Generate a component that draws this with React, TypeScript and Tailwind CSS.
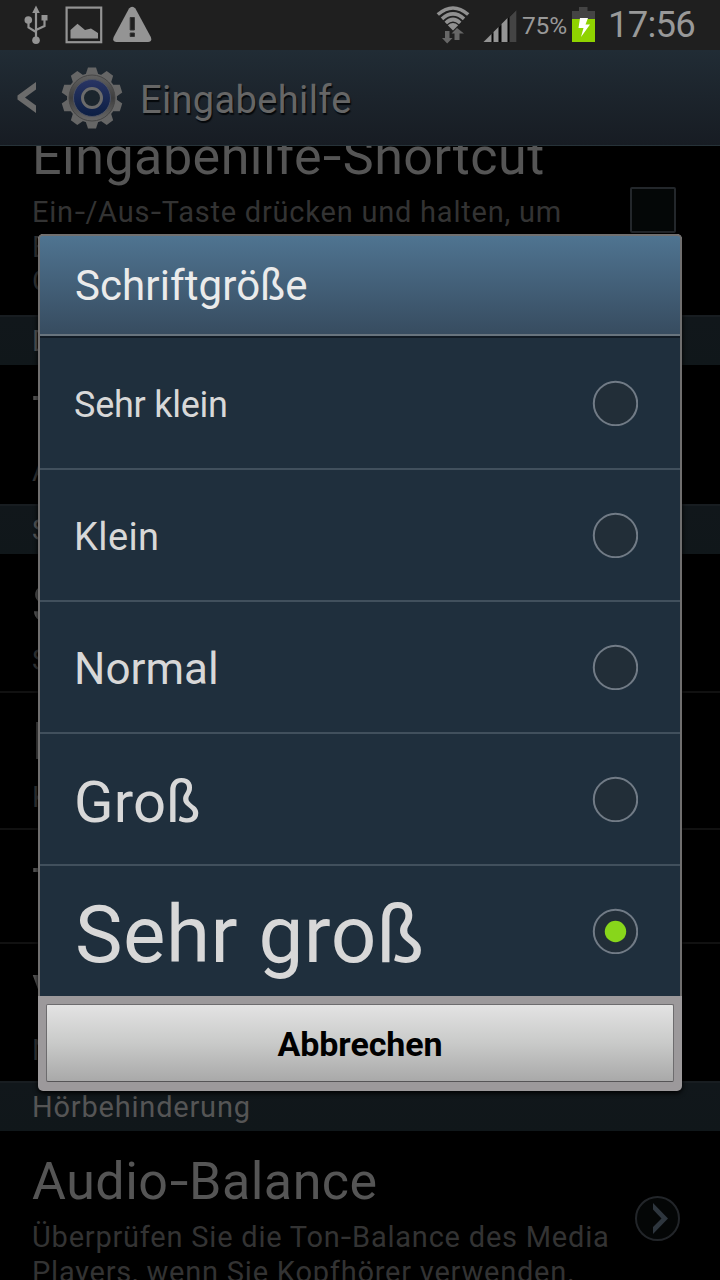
import type { ReactNode } from "react";

const titleText = "whitespace-nowrap text-[52px] leading-[60px] text-[#555555] tracking-[0.5px]";
const summaryText = "whitespace-nowrap text-[29px] leading-[34.5px] text-[#333333] tracking-[0.78px]";

function Hyphen() {
  return <span className="mx-[0.06em] inline-block scale-x-[1.3] tracking-[0px]">-</span>;
}

function StatusBar() {
  return (
    <div className="flex h-[50px] shrink-0 items-start justify-between bg-[#1f1f1f] text-[#999999]">
      <div className="flex pl-6 pt-[5px]">
        <svg width="24" height="40" viewBox="0 0 24 40" fill="none" stroke="#949494" strokeWidth="2.2">
          <path d="M12 6V36M12 27L4.500 22.500V16M12 25L20.500 21V13" />
          <path d="M12 .5L15.800 8H8.200ZM17.500 10H23.500V15.500H17.500Z" fill="#949494" stroke="none" />
          <circle cx="4.300" cy="15" r="3.800" fill="#949494" stroke="none" />
          <circle cx="12" cy="35.200" r="3.800" fill="#949494" stroke="none" />
        </svg>
        <svg className="ml-[17px]" width="38" height="40" viewBox="0 0 38 40">
          <rect x="1.600" y="2.600" width="34.600" height="34.600" fill="none" stroke="#949494" strokeWidth="2.2" />
          <path d="M5.500 33.500V25L12.500 18.800L20 25L26 23.500L33 28V33.500Z" fill="#949494" />
        </svg>
        <svg className="ml-[10px]" width="39" height="40" viewBox="0 0 39 40">
          <path d="M16 3.500Q19.200 0 22.400 3.500L37.800 32Q39.500 37 35 37H3.500Q-1 37 .7 32Z" fill="#949494" />
          <path d="M17.200 12.500H21.400V25H17.200ZM17.200 28H21.400V31.500H17.200Z" fill="#1f1f1f" stroke="#333333" strokeWidth="1" />
        </svg>
      </div>
      <div className="flex pr-[25px] pt-[5px]">
        <svg className="-ml-px" width="34" height="40" viewBox="0 0 34 40" fill="none" stroke="#909090" strokeWidth="3.6">
          <path d="M1.800 9.500Q17 -3.500 32.200 9.500" />
          <path d="M6 13.800Q17 4 28 13.800" />
          <path d="M9.800 18Q17 11 24.200 18" />
          <path d="M11.800 20.300Q17 15.800 22.200 20.300L17 25.500Z" fill="#909090" stroke="none" />
          <path d="M9 26H13.500V33H16.500L11.200 38.500L6 33H9ZM18.500 35V28.500H15.500L21 23L28 28.500H23.500V35Z" fill="#666666" stroke="none" />
        </svg>
        <svg className="ml-[13px]" width="34" height="40" viewBox="0 0 34 40">
          <path d="M1 37L33.500 5V37Z" fill="#050505" />
          <path d="M26.500 12L33.500 5V37H26.500Z" fill="#444444" />
          <path d="M.5 37L8.500 29V37ZM10.500 27L15.500 22V37H10.500ZM18.500 19L24.500 13V37H18.500Z" fill="#949494" />
        </svg>
        <span className="ml-[5px] mt-[6px] w-[46px] whitespace-nowrap text-[24.5px] leading-[30px] tracking-[-0.2px]">75%</span>
        <svg className="ml-[3px]" width="25" height="40" viewBox="0 0 25 40">
          <path d="M8 2H16.500V6H24V14H1V6H8Z" fill="#444444" />
          <path d="M1 14H24V37H1Z" fill="#8fd300" />
          <path d="M9 13H17L14.500 19.500H19L10 32L12.500 23H7.500Z" fill="#ffffff" />
        </svg>
        <span className="ml-[12px] w-[87px] whitespace-nowrap text-[36.5px] leading-[40px] tracking-[-0.8px]">17:56</span>
      </div>
    </div>
  );
}

const teeth = [0, 36, 72, 108, 144, 180, 216, 252, 288, 324];

function Gear() {
  return (
    <svg width="62" height="64" viewBox="-31 -32 62 64">
      <defs>
        <linearGradient id="metal" x1="0" y1="0" x2="0" y2="1">
          <stop offset="0" stopColor="#626262" />
          <stop offset=".5" stopColor="#3e3e3e" />
          <stop offset="1" stopColor="#686868" />
        </linearGradient>
        <linearGradient id="enamel" x1="0" y1="0" x2="0" y2="1">
          <stop offset="0" stopColor="#293564" />
          <stop offset="1" stopColor="#0b1e43" />
        </linearGradient>
      </defs>
      {teeth.map((a) => (
        <path key={a} d="M-6.500 -23L-4 -30.500H4L6.500 -23Z" fill="#666666" transform={`rotate(${a})`} />
      ))}
      <circle r="25" fill="#666666" />
      <circle r="23" fill="url(#metal)" stroke="#454545" strokeWidth="1" />
      <circle r="18.500" fill="url(#enamel)" stroke="#4c5263" strokeWidth="1" />
      <circle r="9.500" fill="#1b252d" stroke="#6b6b6b" strokeWidth="3" />
    </svg>
  );
}

function ActionBar() {
  return (
    <div className="flex h-24 shrink-0 items-start border-b border-[#263238] bg-linear-to-b from-[#212c35] to-[#171c23]">
      <svg className="ml-[17px] mt-8" width="20" height="32" viewBox="0 0 20 32">
        <path d="M19 0V7.500L8 15.500L19 23.500V31L.5 17.500V13.500Z" fill="#6b6b6b" />
      </svg>
      <div className="ml-6 mt-4">
        <Gear />
      </div>
      <h1 className="ml-[17px] mt-[27px] whitespace-nowrap text-[38px] leading-[46px] tracking-[0.35px] text-[#666666] [text-shadow:1px_2px_1px_#05080b]">
        Eingabehilfe
      </h1>
    </div>
  );
}

function Category({ children, className }: { children: ReactNode; className: string }) {
  return (
    <div className={`shrink-0 border-t-2 border-[#181d21] bg-linear-to-b from-[#11171b] to-[#10171a] pl-8 pt-px text-[29px] leading-[46px] text-[#555555] tracking-[0.8px] ${className}`}>
      {children}
    </div>
  );
}

type ItemProps = { title: string; summary?: string; className: string };

function Item({ title, summary, className }: ItemProps) {
  return (
    <div className={`flex shrink-0 flex-col gap-2 overflow-hidden border-[#111111] pl-8 ${className}`}>
      <div className={titleText}>{title}</div>
      {summary && <div className={summaryText}>{summary}</div>}
    </div>
  );
}

function SettingsList() {
  return (
    <main className="flex min-h-0 flex-1 flex-col overflow-hidden">
      <div className="flex h-[169px] shrink-0 justify-between overflow-hidden pl-8 pr-11">
        <div className="-mt-[19px] flex flex-col gap-2">
          <div className={titleText}>
            Eingabehilfe
            <Hyphen />
            Shortcut
          </div>
          <div className={summaryText}>
            Ein
            <Hyphen />
            /Aus
            <Hyphen />
            Taste drücken und halten, um
            <br />
            Eingabehilfe auf Ihrem Gerät mit einer
            <br />
            Geste zu starten
          </div>
        </div>
        <div className="mt-[41px] size-[46px] rounded-xs border-2 border-[#23272b] bg-[#040707]" />
      </div>
      <Category className="h-[50px]">Dienste</Category>
      <Item className="h-[139px] pt-[21px]" title="TalkBack" summary="Aus" />
      <Category className="h-[50px]">Sehbehinderung</Category>
      <Item className="h-[139px] border-b-2 pt-[21px]" title="Schriftgröße" summary="Sehr groß" />
      <Item className="h-[137px] border-b-2 pt-[19px]" title="Negative Farben" summary="Kehrt die Farben um" />
      <Item className="h-[114px] border-b-2 pt-[28px]" title="Text-in-Sprache" />
      <Item className="h-[137px] pt-[21px]" title="Vergrößerung" summary="Nicht aktiviert" />
      <Category className="h-[50px]">Hörbehinderung</Category>
      <div className="flex shrink-0 justify-between pl-8 pr-[39px]">
        <div className="flex flex-col gap-2 pt-[21px]">
          <div className={titleText}>
            Audio
            <Hyphen />
            Balance
          </div>
          <div className={summaryText}>
            Überprüfen Sie die Ton
            <Hyphen />
            Balance des Media
            <br />
            Players, wenn Sie Kopfhörer verwenden.
          </div>
        </div>
        <svg className="mt-[65px]" width="46" height="46" viewBox="0 0 46 46">
          <circle cx="22.500" cy="22.500" r="21.500" fill="#040606" stroke="#222529" strokeWidth="2" />
          <path d="M18 7L33 22.500L18 38V31L26.500 22.500L18 13.500Z" fill="#2e363e" />
        </svg>
      </div>
    </main>
  );
}

const sizes = [
  { label: "Sehr klein", text: "pt-[3px] text-[36px] tracking-[-0.25px]" },
  { label: "Klein", text: "pt-[4px] text-[38px] tracking-[0.4px]" },
  { label: "Normal", text: "pt-[4px] text-[44px] tracking-[0px]" },
  { label: "Groß", text: "pt-[6px] text-[58px] tracking-[0.2px]" },
  { label: "Sehr groß", text: "pl-px pt-[7px] text-[80px] tracking-[0.5px]", selected: true },
];

function Radio({ selected }: { selected?: boolean }) {
  return (
    <svg width="46" height="46" viewBox="0 0 46 46">
      <circle cx="23.500" cy="23.500" r="21.700" fill="#222e38" stroke="#717b86" strokeWidth="2" />
      {selected && <circle cx="23.500" cy="23.500" r="10.700" fill="#88d61b" />}
    </svg>
  );
}

function FontSizeDialog() {
  return (
    <div className="absolute left-[38px] top-[234px] flex h-[857px] w-[644px] flex-col overflow-hidden rounded-[5px] bg-[#9c999b] shadow-[0_2px_5px_#000000]">
      <div className="flex h-[762px] flex-col rounded-t-[5px] border-2 border-b-0 border-[#706f6f] bg-[#1f2f3d]">
        <h2 className="h-[102px] shrink-0 border-b-2 border-[#111b25] bg-[#68747e] pb-[2px]">
          <span className="flex h-[98px] items-center whitespace-nowrap rounded-t-[3px] bg-linear-to-b from-[#4f7491] to-[#374c60] pl-[35px] text-[42px] tracking-[0.1px] text-[#ebebeb]">
            Schriftgröße
          </span>
        </h2>
        {sizes.map((s) => (
          <div key={s.label} className="flex h-[132px] shrink-0 items-center justify-between border-b-2 border-[#41505d] pl-[34px] pr-[42px] last:h-[130px] last:border-b-0">
            <span className={`whitespace-nowrap leading-none text-[#d8d8d8] ${s.text}`}>{s.label}</span>
            <Radio selected={s.selected} />
          </div>
        ))}
      </div>
      <div className="px-2 pt-2">
        <button className="flex h-[78px] w-full items-center justify-center rounded-xs border border-[#6d6c6e] border-b-[#555456] bg-linear-to-b from-[#e3e3e3] via-[#c9cac9] to-[#a9a9a9] pt-[2px] text-[34px] font-bold tracking-[-0.1px] text-black">
          Abbrechen
        </button>
      </div>
    </div>
  );
}

export default function App() {
  return (
    <div className="relative flex h-[1280px] w-[720px] flex-col overflow-hidden bg-black font-['Roboto',sans-serif]">
      <StatusBar />
      <ActionBar />
      <SettingsList />
      <FontSizeDialog />
    </div>
  );
}
